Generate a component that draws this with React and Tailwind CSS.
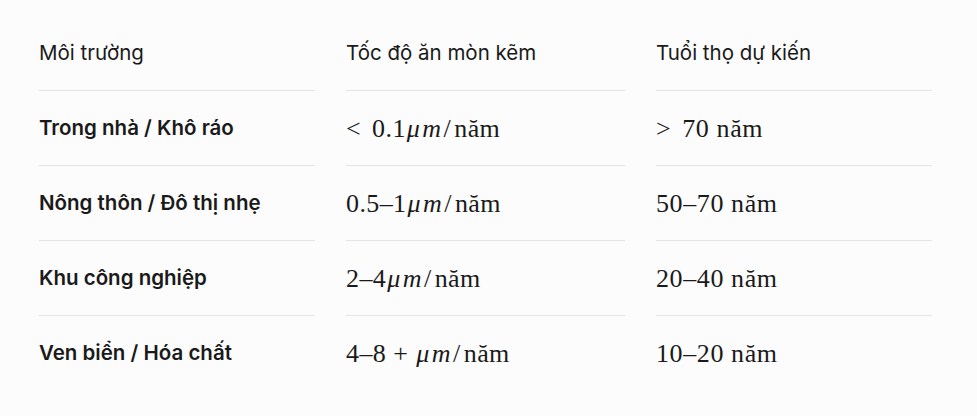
import React from "react";

const ROWS = [
  { env: "Trong nhà / Khô ráo", rel: "<", pre: "0.1", life: ["> ", "70 năm"] },
  { env: "Nông thôn / Đô thị nhẹ", pre: "0.5–1", life: [null, "50–70 năm"] },
  { env: "Khu công nghiệp", pre: "2–4", life: [null, "20–40 năm"] },
  { env: "Ven biển / Hóa chất", pre: "4–8", plus: true, life: [null, "10–20 năm"] },
];

const math = { fontFamily: '"Liberation Serif", "DejaVu Serif", serif' };

function Rate({ row }) {
  return (
    <span style={math} className="text-[26px] tracking-[0.4px] flex items-baseline">
      {row.rel && <span className="mr-[11px]">{row.rel}</span>}
      <span>{row.pre}</span>
      {row.plus && <span className="mx-[7px]">+</span>}
      <span className="italic tracking-[2.5px] ml-[1px]">μm</span>
      <span className="mr-[3px]">/</span>
      <span>năm</span>
    </span>
  );
}

export default function App() {
  const head = "h-[54px] flex items-center pb-[20px] border-b border-[#e5e5e5] text-[20.5px]";
  return (
    <div
      className="w-[977px] h-[416px] bg-[#fcfcfc] text-[#1a1a1a] pl-[39px] pt-[37px]"
      style={{ fontFamily: 'Inter, "Noto Sans", sans-serif' }}
    >
      <div className="grid grid-cols-[276px_279px_276px] gap-x-[31px]">
        <div className={head}>Môi trường</div>
        <div className={head}>Tốc độ ăn mòn kẽm</div>
        <div className={head}>Tuổi thọ dự kiến</div>
        {ROWS.map((r, i) => {
          const last = i === ROWS.length - 1;
          const cell = `h-[75px] flex items-center ${last ? "" : "border-b border-[#e5e5e5]"}`;
          return (
            <React.Fragment key={r.env}>
              <div className={`${cell} text-[20.5px] font-semibold`}>{r.env}</div>
              <div className={cell}>
                <Rate row={r} />
              </div>
              <div className={cell}>
                <span style={math} className="text-[26px] tracking-[0.6px] flex items-baseline">
                  {r.life[0] && <span className="mr-[11px]">&gt;</span>}
                  <span>{r.life[1]}</span>
                </span>
              </div>
            </React.Fragment>
          );
        })}
      </div>
    </div>
  );
}
